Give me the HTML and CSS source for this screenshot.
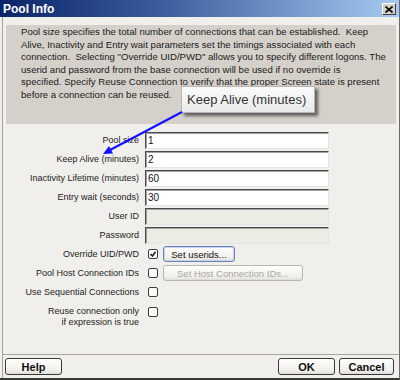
FILE: index.html
```html
<!DOCTYPE html>
<html lang="en">
  <head>
    <meta charset="UTF-8" />
    <title>Pool Info</title>
    <link rel="stylesheet" href="styles.css">
  </head>
  <body>
    <div class="window">
      <div class="titlebar">
        <span class="title">Pool Info</span>
        <span class="close">
          <svg width="8" height="7" viewBox="0 0 8 7"><path d="M0.5 0.5 L7.5 6.5 M7.5 0.5 L0.5 6.5" stroke="#000" stroke-width="1.6"/></svg>
        </span>
      </div>

      <div class="body">
        <div class="intro">
          Pool size specifies the total number of connections that can be established.&nbsp; Keep<br>
          Alive, Inactivity and Entry wait parameters set the timings associated with each<br>
          connection.&nbsp; Selecting "Override UID/PWD" allows you to specify different logons. The<br>
          userid and password from the base connection will be used if no override is<br>
          specified. Specify Reuse Connection to verify that the proper Screen state is present<br>
          before a connection can be reused.
        </div>

        <div class="form">
          <label>Pool size</label>
          <input class="field" type="text" value="1">
          <label>Keep Alive (minutes)</label>
          <input class="field" type="text" value="2">
          <label>Inactivity Lifetime (minutes)</label>
          <input class="field" type="text" value="60">
          <label>Entry wait (seconds)</label>
          <input class="field" type="text" value="30">
          <label>User ID</label>
          <input class="field" type="text" disabled>
          <label>Password</label>
          <input class="field" type="password" disabled>

          <label>Override UID/PWD</label>
          <div class="control">
            <span class="check">
              <svg width="6" height="6" viewBox="0 0 6 6"><path d="M0.5 3 L2.5 5 L5.5 0.8" stroke="#222" stroke-width="1.6" fill="none"/></svg>
            </span>
            <button class="btn small userids">Set userids...</button>
          </div>

          <label>Pool Host Connection IDs</label>
          <div class="control">
            <span class="check"></span>
            <button class="btn small host" disabled>Set Host Connection IDs...</button>
          </div>

          <label>Use Sequential Connections</label>
          <div class="control">
            <span class="check"></span>
          </div>

          <label class="two-line">Reuse connection only<br>if expression is true</label>
          <div class="control top">
            <span class="check"></span>
          </div>
        </div>

        <div class="footer">
          <button class="btn big help">Help</button>
          <div class="actions">
            <button class="btn big ok">OK</button>
            <button class="btn big cancel">Cancel</button>
          </div>
        </div>
      </div>

      <div class="callout">Keep Alive (minutes)</div>
      <svg class="arrow" width="400" height="380" viewBox="0 0 400 380">
        <line x1="182" y1="112" x2="110" y2="150" stroke="#1010ff" stroke-width="2"/>
        <polygon points="103,154 113,153.5 109,146" fill="#1010ff"/>
      </svg>
    </div>
  </body>
</html>
```

FILE: styles.css
```css
body {
  margin: 0;
  font-family: "Liberation Sans", Arial, sans-serif;
  background: #fff;
}
.window {
  position: relative;
  width: 400px;
  height: 380px;
  box-sizing: border-box;
  background: #f1efec;
  border-right: 1px solid #6b6b6b;
  border-bottom: 2px solid #3a3a3a;
  display: flex;
  flex-direction: column;
  overflow: hidden;
}
.titlebar {
  height: 17px;
  flex-shrink: 0;
  display: flex;
  align-items: center;
  justify-content: space-between;
  padding: 0 3px 0 3px;
  background: linear-gradient(to right, #0a246a 0%, #3a5c9c 40%, #a6caf0 100%);
}
.title {
  color: #fff;
  font-weight: bold;
  font-size: 12px;
}
.close {
  width: 12px;
  height: 10px;
  display: flex;
  align-items: center;
  justify-content: center;
  background: #d4d0c8;
  border: 1px solid;
  border-color: #fff #404040 #404040 #fff;
  margin-top: 1px;
}
.body {
  flex: 1;
  display: flex;
  flex-direction: column;
  margin-left: 2px;
  border-left: 1px solid #a3a3a3;
}
.intro {
  margin: 8px 3px 0 3px;
  padding: 1px 0 22px 15px;
  background: #d5d1ca;
  color: #1a1a1a;
  font-size: 9.6px;
  line-height: 12.6px;
  white-space: nowrap;
}
.form {
  display: grid;
  grid-template-columns: 136px 1fr;
  column-gap: 6px;
  row-gap: 2px;
  margin-top: 8px;
}
.form label {
  text-align: right;
  font-size: 9px;
  color: #222;
  line-height: 17px;
}
.form label.two-line {
  line-height: 11px;
  padding-top: 3px;
}
.field {
  width: 184px;
  height: 17px;
  box-sizing: border-box;
  margin: 0;
  padding: 0 2px;
  font-family: inherit;
  font-size: 10px;
  color: #111;
  background: #fff;
  border: 1px solid;
  border-color: #4a4a4a #e4e4e4 #e4e4e4 #4a4a4a;
  box-shadow: inset 1px 1px 0 #a0a0a0;
  outline: none;
}
.field:disabled {
  background: #ecebe4;
}
.control {
  display: flex;
  align-items: center;
  gap: 5px;
  height: 17px;
}
.control.top {
  align-items: flex-start;
  padding-top: 4px;
}
.check {
  width: 10px;
  height: 10px;
  box-sizing: border-box;
  margin-left: 3px;
  border: 1px solid #3c3c3c;
  border-radius: 2px;
  background: #fafaf8;
  display: flex;
  align-items: center;
  justify-content: center;
}
.btn {
  box-sizing: border-box;
  margin: 0;
  padding: 0;
  font-family: inherit;
  color: #111;
  white-space: nowrap;
  border: 1px solid #3a3a3a;
  border-radius: 3px;
  background: linear-gradient(#ffffff, #efeee9 80%, #dedcd5);
}
.btn.small {
  height: 16px;
  font-size: 9.5px;
}
.btn.userids {
  width: 72px;
  border-color: #6c84b4;
  box-shadow: inset 0 0 0 1px #c5d3ee;
}
.btn.host {
  width: 140px;
  color: #a9a79f;
  border-color: #b9b7ad;
}
.footer {
  margin-top: auto;
  display: flex;
  justify-content: space-between;
  border-top: 1px solid #a9a7a0;
  padding: 3px 5px 3px 2px;
}
.actions {
  display: flex;
  gap: 4px;
}
.btn.big {
  height: 17px;
  font-size: 11px;
  font-weight: bold;
}
.help, .ok {
  width: 57px;
}
.cancel {
  width: 55px;
}
.callout {
  position: absolute;
  left: 181px;
  top: 86px;
  width: 134px;
  height: 27px;
  box-sizing: border-box;
  padding-left: 5px;
  line-height: 25px;
  font-size: 13px;
  color: #333;
  background: linear-gradient(#fbfbfb, #e9e9e9);
  border: 1px solid #b5b5b5;
  box-shadow: 3px 3px 3px rgba(0, 0, 0, 0.55);
}
.arrow {
  position: absolute;
  left: 0;
  top: 0;
  pointer-events: none;
}
```
